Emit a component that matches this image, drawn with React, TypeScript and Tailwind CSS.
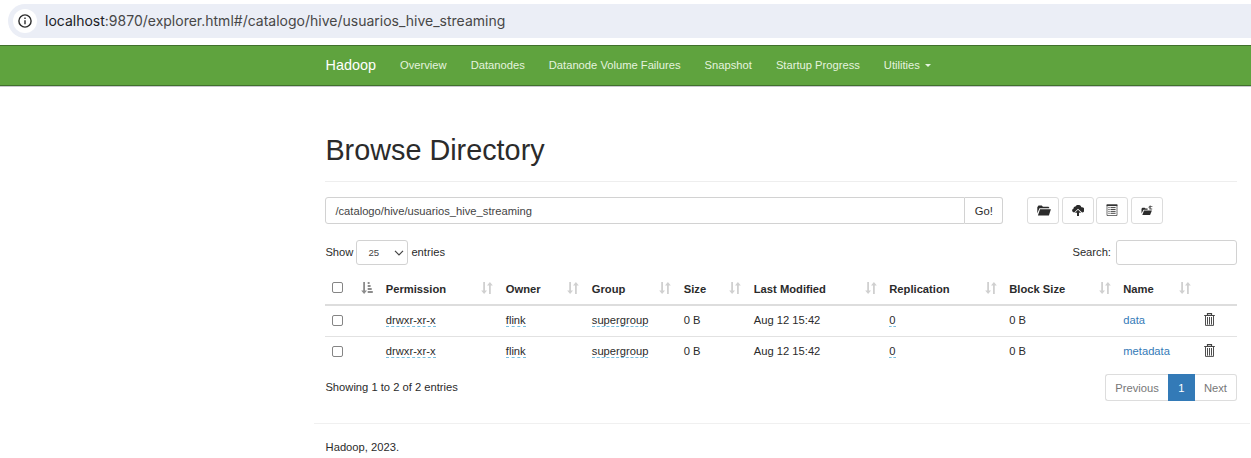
import React from "react";

const navItems = ["Overview", "Datanodes", "Datanode Volume Failures", "Snapshot", "Startup Progress"];
const rows = [{ name: "data" }, { name: "metadata" }];

function SortBoth() {
  return (
    <svg className="h-3 w-3 shrink-0" viewBox="0 0 12 12" fill="#d0d0d0">
      <path d="M2.2 0H4v8.4h2L3.1 12 .2 8.4h2zM8 12h1.8V3.6h2L8.9 0 6 3.6h2z" />
    </svg>
  );
}

function SortAsc() {
  return (
    <svg className="h-3 w-3 shrink-0" viewBox="0 0 12 12" fill="#8c8c8c">
      <path d="M2.2 0H4v8.4h2L3.1 12 .2 8.4h2zM6.7 0h1.9v2H6.7zM6.7 3h2.9v2H6.7zM6.7 6h4v2h-4zM6.7 9h5.1v2H6.7z" />
    </svg>
  );
}

function FolderOpen({ className }: { className: string }) {
  return (
    <svg className={className} viewBox="0 0 14 11" fill="#2b2b2b">
      <path d="M.3 8.5V2.2L1.5.6h3.3l1.1 1.2h5.6l.8 1v.5H2.4z" />
      <path d="M3 4.2h10.9l-2 6.3H.9z" />
    </svg>
  );
}

function CloudUpload() {
  return (
    <svg className="h-[11px] w-3" viewBox="0 0 12 11" fill="#2b2b2b">
      <path d="M2.2 7.6A2.1 2.1 0 0 1 1.6 3.5 1.8 1.8 0 0 1 3.5 1.5 3.2 3.2 0 0 1 9.4 2.3 2.5 2.5 0 0 1 10.1 7.5L6 3.7z" />
      <path d="M6 4.7 9.1 7.8H7V11H5V7.8H2.9z" />
    </svg>
  );
}

function ListAlt() {
  return (
    <svg className="-mt-[2px] h-3 w-3" viewBox="0 0 12 12" fill="none" stroke="#333">
      <path d="M1 1.2h10v10.3H1z" strokeWidth=".7" />
      <path d="M.6 1.2h10.8" strokeWidth="1.7" />
      <path d="M2.4 3.6h1.2M4.5 3.6h5.1M2.4 5.5h1.2M4.5 5.5h5.1M2.4 7.4h1.2M4.5 7.4h5.1M2.4 9.3h1.2M4.5 9.3h5.1" strokeWidth=".9" />
    </svg>
  );
}

function FolderMove() {
  return (
    <svg className="h-[11px] w-3" viewBox="0 0 12 11" fill="#2b2b2b">
      <path d="M.5 8.5V3.7l.9-1h2.3l.8.8h2.1v1.2H2.5z" />
      <path d="M3 5.5h7.9l-1.8 4.4H1.3z" />
      <path d="M8.4 4.6V2.6H7L9.2.2l.7 1.1h1.5v.8H9.7v1.5h1.5v1z" fill="#555" />
    </svg>
  );
}

function Trash() {
  return (
    <svg className="-mt-[3px] h-[13px] w-[11px]" viewBox="0 0 11 13" fill="none" stroke="#444">
      <path d="M.2 2.5h10.6M3.5 2V.6h4V2" strokeWidth="1.2" />
      <path d="M1.5 3v9.4h8V3M3.5 4v7.6M5.5 4v7.6M7.5 4v7.6" strokeWidth=".95" />
    </svg>
  );
}

function Check() {
  return <span className="block h-[11px] w-[11px] rounded-[2px] border border-[#858585] bg-white" />;
}

function Th({ label }: { label: string }) {
  return (
    <th className="h-[34px] p-0 px-[6.4px] text-left font-bold">
      <div className="flex items-center justify-between pt-[3px]">
        <span>{label}</span>
        <span className="-mt-[3px]">
          <SortBoth />
        </span>
      </div>
    </th>
  );
}

function Dotted({ children }: { children: React.ReactNode }) {
  return <span className="inline-block h-[14px] border-b border-dashed border-[#78bfe0] leading-[14px]">{children}</span>;
}

const toolButton = "flex h-[27px] w-8 items-center justify-center rounded-[3px] border border-[#dcdcdc] bg-white";

export default function App() {
  return (
    <div className="h-[458px] overflow-hidden bg-white font-['Liberation_Sans',Arial,sans-serif] text-[11.2px] leading-4 text-[#2b2b2b]">
      <div className="flex h-[45px] items-start pl-2 pt-1">
        <div className="flex h-[34px] flex-1 items-center rounded-l-full bg-[#ebeef6] pl-[5px]">
          <span className="flex h-6 w-6 items-center justify-center rounded-full bg-white">
            <svg className="h-[14px] w-[14px]" viewBox="0 0 14 14" fill="none" stroke="#2c2c2c">
              <circle cx="7" cy="7" r="6.1" strokeWidth="1.4" />
              <path d="M7 6.2v4M7 3.6V5" strokeWidth="1.4" />
            </svg>
          </span>
          <span className="ml-2 whitespace-nowrap font-[Inter,Roboto,sans-serif] text-[14px] leading-5 text-[#474747]">
            <span className="text-[#202124]">localhost</span>:9870/explorer.html#/catalogo/hive/usuarios_hive_streaming
          </span>
        </div>
      </div>

      <nav className="flex h-[41px] items-center border-y border-[#40702c] bg-[#5fa33e] pb-px pl-[325.6px] shadow-[0_1px_0_#c9c9cf]">
        <span className="mr-6 text-[14.4px] text-white">Hadoop</span>
        <div className="flex gap-6 whitespace-nowrap pb-px text-[#e5f3df]">
          {navItems.map((item) => (
            <a key={item}>{item}</a>
          ))}
          <a className="flex items-center">
            Utilities
            <span className="ml-[5px] mt-[2px] border-x-[3px] border-t-[3px] border-x-transparent border-t-[#e5f3df]" />
          </a>
        </div>
      </nav>

      <main className="ml-[325.4px] w-[911.6px]">
        <h1 className="flex h-[96px] items-end border-b border-[#eee] pb-[15px] text-[28.8px] leading-8">Browse Directory</h1>

        <div className="mt-[15px] flex h-[27px]">
          <div className="flex w-[640px] items-center rounded-l-[3px] border border-[#d2d2d2] px-[9px] text-[#444]">
            /catalogo/hive/usuarios_hive_streaming
          </div>
          <button className="w-[38px] rounded-r-[3px] border border-l-0 border-[#d2d2d2]">Go!</button>
          <div className="ml-[23.6px] flex gap-[2.6px]">
            <button className={toolButton}><FolderOpen className="h-[11px] w-[14px] translate-x-px" /></button>
            <button className={toolButton}><CloudUpload /></button>
            <button className={toolButton}><ListAlt /></button>
            <button className={toolButton}><FolderMove /></button>
          </div>
        </div>

        <div className="mt-4 flex h-[25px] items-center justify-between">
          <div className="flex items-center">
            <span className="-mt-[2px]">Show</span>
            <span className="mx-[3px] flex h-[25px] w-[52px] items-center justify-between rounded-[3px] border border-[#d2d2d2] pl-[11px] pr-[3px] text-[9.6px] text-[#444]">
              25
              <svg className="h-2 w-[10px]" viewBox="0 0 10 8" fill="none" stroke="#444" strokeWidth="1.2">
                <path d="m1 1.8 4 4 4-4" />
              </svg>
            </span>
            <span className="-mt-[2px]">entries</span>
          </div>
          <div className="flex items-center gap-[5px]">
            <span className="-mt-[2px]">Search:</span>
            <span className="h-[25px] w-[121px] rounded-[3px] border border-[#d2d2d2]" />
          </div>
        </div>

        <table className="mt-[6px] w-[911.6px] table-fixed border-collapse whitespace-nowrap">
          <colgroup>
            <col className="w-[54px]" />
            <col className="w-[120px]" />
            <col className="w-[86px]" />
            <col className="w-[92px]" />
            <col className="w-[70px]" />
            <col className="w-[135.5px]" />
            <col className="w-[120px]" />
            <col className="w-[114px]" />
            <col className="w-[80.5px]" />
            <col className="w-[39.6px]" />
          </colgroup>
          <thead>
            <tr className="border-b-2 border-[#ddd]">
              <th className="px-[6.4px]">
                <div className="flex items-center justify-between">
                  <Check />
                  <SortAsc />
                </div>
              </th>
              {["Permission", "Owner", "Group", "Size", "Last Modified", "Replication", "Block Size", "Name"].map((h) => (
                <Th key={h} label={h} />
              ))}
              <th />
            </tr>
          </thead>
          <tbody>
            {rows.map((row, i) => (
              <tr key={row.name} className={i === 0 ? "h-[31px] border-b border-[#e2e2e2]" : "h-[31px]"}>
                <td className="px-[6.4px]"><Check /></td>
                <td className="px-[6.4px] pb-[2px]"><Dotted>drwxr-xr-x</Dotted></td>
                <td className="px-[6.4px] pb-[2px]"><Dotted>flink</Dotted></td>
                <td className="px-[6.4px] pb-[2px]"><Dotted>supergroup</Dotted></td>
                <td className="px-[6.4px] pb-[2px]">0 B</td>
                <td className="px-[6.4px] pb-[2px]">Aug 12 15:42</td>
                <td className="px-[6.4px] pb-[2px]"><Dotted>0</Dotted></td>
                <td className="px-[6.4px] pb-[2px]">0 B</td>
                <td className="px-[6.4px] pb-[2px] text-[#337ab7]">{row.name}</td>
                <td className="px-[6.4px]"><Trash /></td>
              </tr>
            ))}
          </tbody>
        </table>

        <div className="mt-[7px] flex justify-between">
          <span className="mt-[5px]">Showing 1 to 2 of 2 entries</span>
          <div className="flex h-[27px] text-[#777]">
            <span className="flex w-[63px] items-center justify-center rounded-l-[3px] border border-r-0 border-[#ddd]">Previous</span>
            <span className="flex w-[27px] items-center justify-center bg-[#337ab7] text-white">1</span>
            <span className="flex w-[42px] items-center justify-center rounded-r-[3px] border border-l-0 border-[#ddd]">Next</span>
          </div>
        </div>
      </main>

      <footer className="ml-[313.6px] mt-[22px] w-[936px] border-t border-[#f0f0f0] px-3 pt-[15px]">Hadoop, 2023.</footer>
    </div>
  );
}
